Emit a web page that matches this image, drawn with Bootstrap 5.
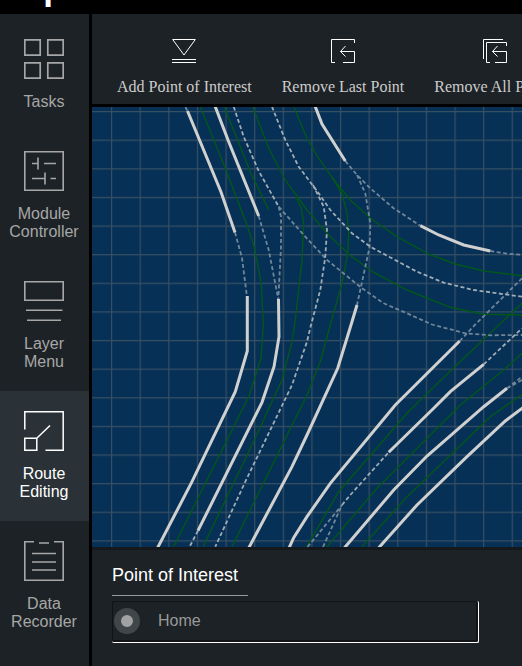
<!DOCTYPE html>
<html lang="en">
<head>
<meta charset="utf-8">
<meta name="viewport" content="width=device-width, initial-scale=1">
<title>Route Editing</title>
<link href="https://cdn.jsdelivr.net/npm/bootstrap@5.3.0/dist/css/bootstrap.min.css" rel="stylesheet">
<style>
body{background:#000;font-family:"Liberation Sans",Arial,sans-serif;font-size:16px;height:666px}
.topbar{height:14px}
.brand{font-size:35px;line-height:40px;margin:-32px 0 0 23px;font-weight:700;letter-spacing:.8px}
.sidebar{width:89px;background:#1d2226;padding-top:5px}
.side-item{padding:20px 1px 20px 0;color:#a7a7a7;line-height:18px;gap:14px}
.side-item.current{background:#2a3238;color:#fff}
.side-item svg{width:40px;height:40px}
svg{display:block;fill:none;stroke:currentColor}
.main-area{margin-left:3px}
.tools{height:90px;background:#1d2226;padding:25px 0 0 25px;gap:30px;margin-bottom:3px;color:#fff}
.tool svg{width:24px;height:24px}
.tool span{font:16px/20px "Liberation Serif","Times New Roman",serif;color:#ccc;margin-top:14px}
.map{background:#063056;height:440px}
.poi{background:#1d2226;border-top:3px solid #16191b;padding:14px 20px 0}
.poi-title{font-size:18px;line-height:22px;width:136px;height:32px;border-bottom:1px solid #999}
.poi-row{width:367px;height:42px;margin-top:5px;border:solid #fff;border-width:0 1px 1px 0;border-radius:2px;box-shadow:inset 1px 1px #111314,inset -2px -2px #111314;color:#999;padding:0 0 2px 2px}
.radio-dot{width:26px;height:26px;border-radius:50%;border:7px solid #40464a;background:#a2a2a2;margin-right:18px}
</style>
<script src="https://cdn.jsdelivr.net/npm/bootstrap@5.3.0/dist/js/bootstrap.bundle.min.js"></script>
</head>
<body class="d-flex flex-column overflow-hidden">
<header class="topbar flex-shrink-0 overflow-hidden text-white"><div class="brand">apollo</div></header>
<div class="d-flex flex-grow-1">
<nav class="sidebar flex-shrink-0 d-flex flex-column text-center">
<div class="side-item d-flex flex-column align-items-center"><svg viewBox="0 0 40 40" stroke-width="1.7"><path d="M.8.8h15.4v15.4H.8zM23.8.8h15.4v15.4H23.8zM.8 23.8h15.4v15.4H.8zM23.8 23.8h15.4v15.4H23.8z"/></svg><span>Tasks</span></div>
<div class="side-item d-flex flex-column align-items-center"><svg viewBox="0 0 40 40" stroke-width="1.6"><path d="M.8.8h38.4v38.4H.8zM8 12.5h6M14 6.5v12M20 12.5h12M8 27.5h12.5M21 21.5v12M26.500 27.500h5.500"/></svg><span>Module<br>Controller</span></div>
<div class="side-item d-flex flex-column align-items-center"><svg viewBox="0 0 40 40" stroke-width="1.6"><path d="M.8.8h38.400v18.400H.8zM2 29.200h36.500M3 39.200h34"/></svg><span>Layer<br>Menu</span></div>
<div class="side-item current d-flex flex-column align-items-center"><svg viewBox="0 0 40 40" stroke-width="1.500"><path d="M.8 18.500V.8h38.400v38.400H21.500M.8 27.200h12v12H.8zM13 27l13-12.500"/></svg><span>Route<br>Editing</span></div>
<div class="side-item d-flex flex-column align-items-center"><svg viewBox="0 0 40 40" stroke-width="1.600"><path d="M10 .8H.8v38.400h38.400V.8H30M15 2h10M8 12.500h24M8 21h24M8 29h24"/></svg><span>Data<br>Recorder</span></div>
</nav>
<main class="main-area flex-grow-1 d-flex flex-column overflow-hidden">
<div class="tools flex-shrink-0 d-flex text-nowrap">
<div class="tool d-flex flex-column align-items-center"><svg viewBox="0 0 24 24"><path d="M.7.5h22.600L12 16zM0 20.500h24M0 23.500h24"/></svg><span>Add Point of Interest</span></div>
<div class="tool d-flex flex-column align-items-center"><svg viewBox="0 0 24 24"><path d="M23.500 4V.5H.5v23H4M12 23.500h11.500v-11H9.500M14.500 7l-5 5.500 5 5"/></svg><span>Remove Last Point</span></div>
<div class="tool d-flex flex-column align-items-center"><svg viewBox="0 0 24 24"><path d="M20 .5H.5V20M23.500 7V3.500h-20v20H7M12 23.500h11.500v-11H9.500M14.500 7l-5 5.500 5 5"/></svg><span>Remove All Points</span></div>
</div>
<div class="map flex-shrink-0">
<svg width="430" height="440" viewBox="92 107 430 440">
<defs><pattern id="grid" x="111" y="111" width="28.620" height="28.620" patternUnits="userSpaceOnUse"><path d="M.6 0v28.620M0 .6h28.620" stroke="#374f63" stroke-width="1.200"/></pattern></defs>
<rect x="92" y="107" width="430" height="440" fill="url(#grid)" stroke="none"/>
<g stroke="#02571a" stroke-width="1.400">
<path d="M200.300 106.700 225.300 168.300 247 225 253.700 245 261.300 283.300 263.300 325 261 358.300 248.700 396.700 173.700 546.700"/>
<path d="M224.300 106.700 250.300 171.700 268.700 210"/>
<path d="M252.700 106.700 268.700 148.300 285.300 180 307 210 327 233.300 348.700 254.300 373.700 272.300 407 290 450.300 307.300 483.700 314.300 522 315"/>
<path d="M296 196.700 301.300 208.300 303.700 223.300 302 260 294.700 325 292 341.700 282 380 252 445 203 546.700"/>
<path d="M293.700 106.700 307 138.300 318.700 158.300 335.300 181.700 350.300 200 370.300 218.300 397 236.700 428.700 254 455.300 264 483.700 271 522 275.700"/>
<path d="M331 176 342 193.300 347 213.300 348.700 233.300 347.700 253.300 342 283.300 330.300 325 320.300 361.700 307 395 232 546.700"/>
<path d="M306.500 547 338.700 491.700 407 413.300 438.700 382.300 498.700 325 522 303.300"/>
<path d="M327 546.700 377 488.300 460.300 405 503.700 370 522 353.300"/>
<path d="M362 546.700 407 496.700 490.300 416.700 522 394.300"/>
</g>
<g stroke="#718799" stroke-width="1.800" stroke-dasharray="4 2.500">
<path d="M185.500 107l2 4M235 232.500 242 258 247 297"/>
<path d="M258.700 216 268.700 250 278.300 299"/>
<path d="M278.700 206.700 305.300 236.700 327 260 362 288.300 383.700 303.300 407 313.300 432 324.500 465.300 333.300 490.300 335.300 522 335"/>
<path d="M278.700 206.700 281 216.700 281 246.700 278.300 299"/>
<path d="M345.300 161 357 175 370.300 188.300 393.700 208.300 420.300 225.700M490.300 251 507 253.700 522 254.700"/>
<path d="M357 175 365.300 193.300 370.300 223.300 369.700 246.700 357 305"/>
<path d="M459.700 341 475.300 324.500 522 278.300"/>
<path d="M307.500 547 342 505M323 547 342 505M507 388.300 522 376.700M507 388.300 522 380"/>
</g>
<g stroke="#a0acb6" stroke-width="1.800" stroke-dasharray="4 2.500">
<path d="M198 530.700 189.300 547.300"/>
<path d="M233.700 106.700 243.700 136.700 258.700 171 278.700 206.700"/>
<path d="M272 106.700 285.300 140 298.700 166.700 318.700 193.300 330.300 210 352 233.300 370.300 246.700 417 271.700 443.700 282.700 473.700 290 522 296.700"/>
<path d="M313 185 323.700 206.700 327 230 325.300 256.700 320.300 290 311 325 307 341.700 292 385 245.300 481.700 215.300 546.700"/>
<path d="M342 505 350.300 495 388.700 452.300M483.700 364.300 522 328.300"/>
</g>
<g stroke="#d0d0d0" stroke-width="3">
<path d="M187.500 111 221 192 235 232.500"/>
<path d="M247.300 296 247.300 351 235.300 391.700 192 481.700 157.500 548"/>
<path d="M215 106 228.700 141.700 258.700 216"/>
<path d="M278.500 299 279 336.700 274 366.700 262 402.300 198 530.700"/>
<path d="M315 106 322 124 345.300 161M420.300 225.700 438.700 235 463.700 245 490.300 251"/>
<path d="M357 305 351 325 337.700 368.300 307 435 292 466.700 248.700 548"/>
<path d="M289 548 293.700 537.700 307 516.700 330.300 483.300 395.300 405 459.700 341"/>
<path d="M388.700 452.300 433.700 408.300 450.300 391.700 483.700 364.300"/>
<path d="M344.300 548 393.700 490 427 456 483.700 406.700 507 388.300"/>
<path d="M378.500 548 417 505 467 456.700 505.300 421 523 407.600"/>
</g>
</svg>
</div>
<section class="poi flex-grow-1">
<div class="poi-title text-white">Point of Interest</div>
<div class="poi-row d-flex align-items-center"><i class="radio-dot"></i><span>Home</span></div>
</section>
</main>
</div>
</body>
</html>
